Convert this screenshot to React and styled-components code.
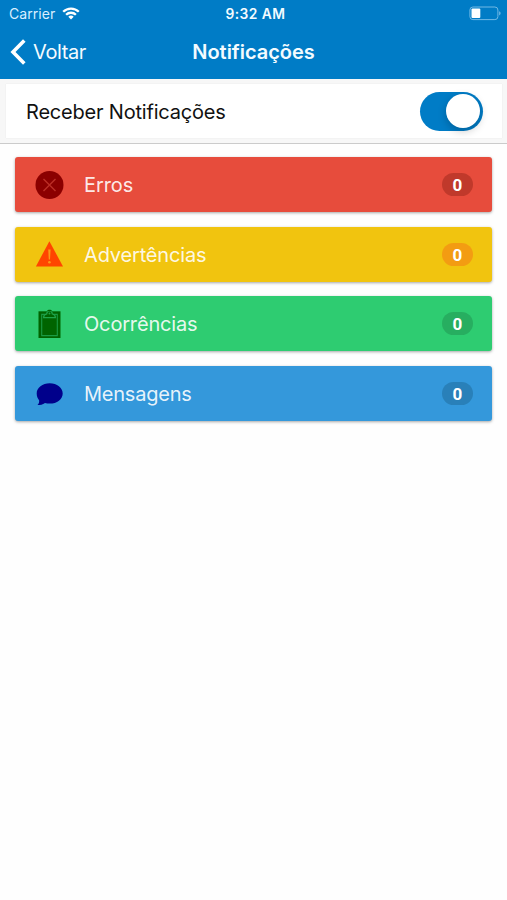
import React, { useState } from 'react';
import styled, { createGlobalStyle } from 'styled-components';

const GlobalStyle = createGlobalStyle`
  * { box-sizing: border-box; }
  body { margin: 0; background: #fff; font-family: Inter, "Liberation Sans", sans-serif; }
`;

const Screen = styled.div`
  min-height: 900px;
  background: #fefefe;
`;

const TopArea = styled.header`
  height: 79px;
  background: #007cc6;
  color: #f3fbff;
`;

const StatusBar = styled.div`
  height: 27px;
  display: grid;
  grid-template-columns: 1fr auto 1fr;
  align-items: center;
  padding: 0 6px 0 9px;
  font-size: 14px;
  line-height: 27px;
`;

const Carrier = styled.div`
  display: flex;
  align-items: center;
  gap: 6.5px;
  color: #d9efff;
  letter-spacing: 0.05px;
`;

const Clock = styled.div`
  padding: 1px 0 0 1px;
  font-size: 13.8px;
  font-weight: 600;
  line-height: 26px;
  letter-spacing: 0.45px;
`;

const BatterySlot = styled.div`
  display: flex;
  justify-content: flex-end;
`;

const NavBar = styled.nav`
  height: 52px;
  display: grid;
  grid-template-columns: 1fr auto 1fr;
  align-items: center;
  padding: 0 10px 2px;
`;

const BackButton = styled.button`
  display: flex;
  align-items: center;
  gap: 7px;
  padding: 0;
  border: 0;
  background: none;
  color: inherit;
  font: 400 20px/26px Inter, sans-serif;
  letter-spacing: -0.4px;
`;

const Title = styled.h1`
  margin: 0;
  font-size: 20px;
  font-weight: 600;
  line-height: 26px;
  letter-spacing: -0.03px;
`;

const SettingBar = styled.section`
  height: 65px;
  padding: 5px 5px 5px 6px;
  background: #f7f7f7;
  border-bottom: 1px solid #cbcbcb;
`;

const SettingRow = styled.div`
  height: 54px;
  display: flex;
  align-items: center;
  justify-content: space-between;
  padding: 0 19px 0 20px;
  background: #fff;
  color: #111;
  font-size: 20px;
  box-shadow: 0 0 1px #e2e2e2;
`;

const SettingLabel = styled.span`
  padding-top: 2px;
  letter-spacing: -0.2px;
`;

const Switch = styled.button`
  width: 63px;
  height: 39px;
  display: flex;
  align-items: center;
  justify-content: ${(p) => (p.$on ? 'flex-end' : 'flex-start')};
  padding: 0 3px 0 2px;
  border: 0;
  border-radius: 20px;
  background: ${(p) => (p.$on ? '#007cc6' : '#dcdcdc')};
`;

const Knob = styled.span`
  width: 34px;
  height: 34px;
  border-radius: 50%;
  background: #fff;
  box-shadow: 0 3px 9px rgba(0, 0, 0, 0.22);
`;

const CardList = styled.main`
  display: flex;
  flex-direction: column;
  gap: 14.6px;
  padding: 13.3px 15px;
`;

const Card = styled.div`
  height: 55px;
  display: flex;
  align-items: center;
  padding: 0 19px 0 20px;
  border-radius: 3px;
  background: ${(p) => p.$color};
  box-shadow: 0 1px 3px rgba(0, 0, 0, 0.35);
`;

const IconSlot = styled.span`
  width: 49px;
  height: 30px;
  display: flex;
`;

const CardLabel = styled.span`
  flex: 1;
  padding-top: 1px;
  color: rgba(255, 255, 255, 0.9);
  font-size: 20px;
  letter-spacing: ${(p) => p.$spacing}px;
`;

const Badge = styled.span`
  width: 31px;
  height: 23px;
  border-radius: 12px;
  background: ${(p) => p.$color};
  color: #fff;
  font-family: Roboto, Inter, sans-serif;
  font-size: 17px;
  font-weight: 700;
  line-height: 24px;
  text-align: center;
`;

const WifiIcon = () => (
  <svg width="18" height="13" viewBox="0 0 18 13" fill="none" stroke="#fff" strokeWidth="2.3">
    <path d="M1.2 4.8a11 11 0 0 1 15.6 0" />
    <path d="M4.1 7.8a6.9 6.9 0 0 1 9.8 0" />
    <path d="M9 12.4 6.3 9.8a3.8 3.8 0 0 1 5.4 0Z" fill="#fff" stroke="none" />
  </svg>
);

const BatteryIcon = () => (
  <svg width="32" height="15" viewBox="0 0 32 15">
    <rect x="0.9" y="1" width="28" height="12.6" rx="3" fill="none" stroke="#71b9e5" strokeWidth="1" />
    <rect x="2.5" y="2.6" width="8.8" height="9.4" rx="1" fill="#fff" />
    <path d="M30.3 5.2c1.6.7 1.6 3.5 0 4.2z" fill="#8fc9ee" />
  </svg>
);

const ChevronIcon = () => (
  <svg width="16" height="26" viewBox="0 0 16 26" fill="none" stroke="#fff" strokeWidth="3.6">
    <path d="M14.3 1.6 3 13l11.3 11.4" />
  </svg>
);

const ErrorIcon = () => (
  <svg width="30" height="30" viewBox="0 0 30 30">
    <circle cx="14.5" cy="15" r="14" fill="#8b0000" />
    <path d="m8.5 9 12 12m0-12-12 12" stroke="#bb2e26" strokeWidth="1.4" />
  </svg>
);

const WarningIcon = () => (
  <svg width="30" height="30" viewBox="0 0 30 30">
    <path d="M14.4 2.3 28 27.4H.9Z" fill="#ff4500" />
    <path d="M13.2 10.5h2.4l-.6 10h-1.2Z" fill="#fa9a18" />
    <circle cx="14.4" cy="23.3" r="1.3" fill="#fa9a18" />
  </svg>
);

const ClipboardIcon = () => (
  <svg width="30" height="30" viewBox="0 0 30 30">
    <path d="M3.5 2.3h22V29h-22Z" fill="#006400" />
    <path d="M6.7 5.4h15.6v21.2H6.7Z" fill="none" stroke="#1b9a45" strokeWidth="1.1" />
    <path
      d="M8.6 8.6c0-2.4 1.2-3.3 3.1-3.6.2-2 1.1-3.1 2.8-3.1s2.6 1.1 2.8 3.1c1.9.3 3.1 1.2 3.1 3.6Z"
      fill="#006400"
      stroke="#1fa54c"
      strokeWidth="1.2"
    />
    <path d="M11.6 2.3c.5-1.1 1.5-1.6 2.9-1.6s2.4.5 2.9 1.6Z" fill="#006400" />
    <circle cx="14.5" cy="4.6" r="1" fill="#1fa54c" />
  </svg>
);

const MessageIcon = () => (
  <svg width="30" height="30" viewBox="0 0 30 30">
    <path
      d="M14.7 4.2C22 4.2 27.7 8.6 27.7 14.4s-5.7 10.2-13 10.2c-1.7 0-3.2-.2-4.7-.7-2.3 1.6-4.8 2.2-7.5 2.2 1.3-1.5 1.9-2.9 1.6-4.9-1.5-1.8-2.4-4.2-2.4-6.8C1.7 8.6 7.5 4.2 14.7 4.2Z"
      fill="#00008b"
    />
  </svg>
);

const categories = [
  { label: 'Erros', count: 0, color: '#e74c3c', badge: '#c0392b', spacing: -0.1, Icon: ErrorIcon },
  { label: 'Advertências', count: 0, color: '#f1c40f', badge: '#f39c12', spacing: -0.17, Icon: WarningIcon },
  { label: 'Ocorrências', count: 0, color: '#2ecc71', badge: '#27ae60', spacing: -0.17, Icon: ClipboardIcon },
  { label: 'Mensagens', count: 0, color: '#3498db', badge: '#2980b9', spacing: -0.23, Icon: MessageIcon },
];

export default function App() {
  const [enabled, setEnabled] = useState(true);
  return (
    <Screen>
      <GlobalStyle />
      <TopArea>
        <StatusBar>
          <Carrier>Carrier<WifiIcon /></Carrier>
          <Clock>9:32 AM</Clock>
          <BatterySlot><BatteryIcon /></BatterySlot>
        </StatusBar>
        <NavBar>
          <BackButton><ChevronIcon />Voltar</BackButton>
          <Title>Notificações</Title>
        </NavBar>
      </TopArea>
      <SettingBar>
        <SettingRow>
          <SettingLabel>Receber Notificações</SettingLabel>
          <Switch
            role="switch"
            aria-checked={enabled}
            aria-label="Receber Notificações"
            $on={enabled}
            onClick={() => setEnabled(!enabled)}
          >
            <Knob />
          </Switch>
        </SettingRow>
      </SettingBar>
      <CardList>
        {categories.map(({ label, count, color, badge, spacing, Icon }) => (
          <Card key={label} $color={color}>
            <IconSlot><Icon /></IconSlot>
            <CardLabel $spacing={spacing}>{label}</CardLabel>
            <Badge $color={badge}>{count}</Badge>
          </Card>
        ))}
      </CardList>
    </Screen>
  );
}
